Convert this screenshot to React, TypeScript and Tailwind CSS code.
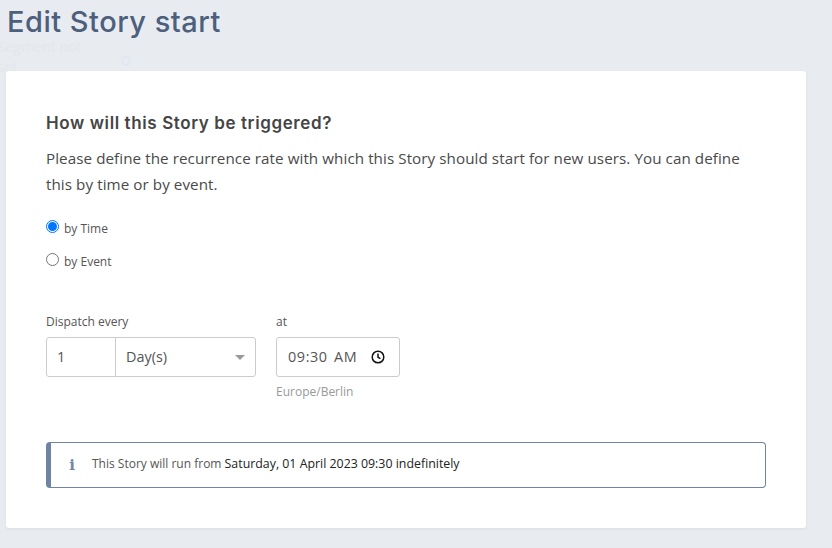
import React from "react";

export default function App() {
  return (
    <div className="relative w-[832px] h-[548px] overflow-hidden bg-[#e8ebf0] font-['Open_Sans',sans-serif]">
      <div className="absolute left-[-2px] top-[37px] w-[90px] text-[14px] leading-[20px] text-[#e4e7ec]">Segment not set</div>
      <div className="absolute left-[121px] top-[56px] w-[10px] h-[10px] rounded-full border-2 border-[#e1e7f0]" />
      <div className="relative pl-[7px] h-[71px]">
        <h1 className="font-['Inter',sans-serif] text-[29px] leading-[44px] font-medium tracking-[0.5px] text-[#4c5f7d]">Edit Story start</h1>
      </div>
      <div className="relative ml-[6px] w-[800px] h-[457px] bg-white rounded-[3px] shadow-[0_1px_3px_rgba(0,0,0,0.06)] pl-[40px] pr-[40px] pt-[41px]">
        <h2 className="font-['Inter',sans-serif] text-[17px] leading-[22px] font-semibold tracking-[0.6px] text-[#454545]">How will this Story be triggered?</h2>
        <p className="mt-[11px] w-[710px] text-[15.2px] leading-[26px] tracking-[0.07px] text-[#4a4a4a]">
          Please define the recurrence rate with which this Story should start for new users. You can define this by time or by event.
        </p>
        <div className="mt-[23px] flex flex-col gap-[15px]">
          <label className="flex items-center h-[18px] text-[12px] text-[#555]">
            <span className="-mt-[5px] w-[13px] h-[13px] rounded-full border-[1.5px] border-[#0075ff] flex items-center justify-center mr-[5px]">
              <span className="w-[9px] h-[9px] rounded-full bg-[#0075ff]" />
            </span>
            by Time
          </label>
          <label className="flex items-center h-[18px] text-[12px] text-[#555]">
            <span className="-mt-[5px] w-[13px] h-[13px] rounded-full border border-[#767676] mr-[5px]" />
            by Event
          </label>
        </div>
        <div className="mt-[43px] flex gap-[20px] items-start">
          <div>
            <div className="text-[12px] leading-[15px] text-[#555] mb-[8px]">Dispatch every</div>
            <div className="flex w-[210px] h-[40px] border border-[#ccc] rounded-[3px] text-[14.4px] text-[#555]">
              <div className="w-[69px] border-r border-[#ccc] pl-[10px] flex items-center">1</div>
              <div className="flex-1 flex items-center justify-between pl-[10px] pr-[10px]">
                Day(s)
                <span className="w-0 h-0 border-x-[5px] border-x-transparent border-t-[5px] border-t-[#999]" />
              </div>
            </div>
          </div>
          <div>
            <div className="text-[12px] leading-[15px] text-[#555] mb-[8px]">at</div>
            <div className="flex items-center justify-between w-[124px] h-[40px] border border-[#ccc] rounded-[3px] pl-[11px] pr-[14px] text-[14.4px] text-[#555]">
              <span className="tracking-[0.6px] [word-spacing:2px]">09:30 AM</span>
              <svg width="14" height="14" viewBox="0 0 14 14" fill="none" stroke="#111" strokeWidth="1.5">
                <circle cx="7" cy="7" r="5.8" />
                <path d="M7 3.6V7.2L9.4 8.6" />
              </svg>
            </div>
            <div className="mt-[7px] text-[12px] leading-[15px] text-[#999]">Europe/Berlin</div>
          </div>
        </div>
        <div className="mt-[43px] flex items-center w-[720px] h-[46px] border border-[#6f83a3] border-l-[5px] rounded-[4px] text-[12px] text-[#555]">
          <span className="w-[41px] pl-[1px] text-center font-['DejaVu_Serif',serif] font-bold text-[15px] text-[#7187a8]">i</span>
          <span className="-mt-[2px]">This Story will run from <span className="text-[12.36px] text-[#222] font-medium">Saturday, 01 April 2023 09:30 indefinitely</span></span>
        </div>
      </div>
    </div>
  );
}
